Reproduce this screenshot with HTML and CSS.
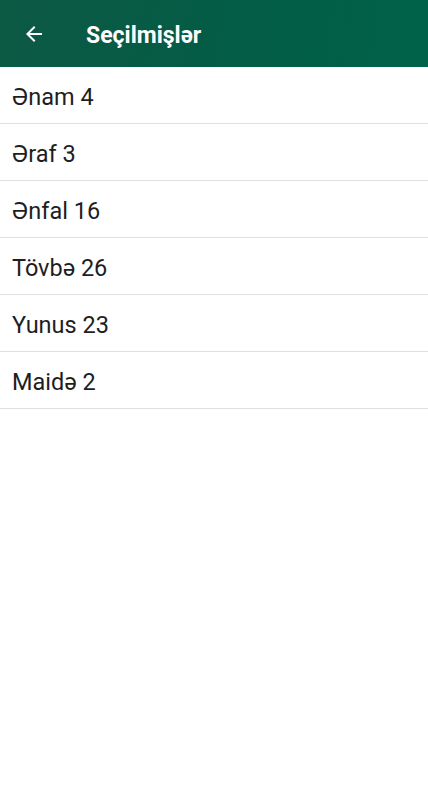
FILE: index.html
```html
<!DOCTYPE html>
<html>
<head>
<meta charset="utf-8">
<link rel="stylesheet" href="styles.css">
</head>
<body>
<header class="bar">
  <svg class="back" width="24" height="24" viewBox="0 0 24 24"><path d="M20 11H7.83l5.59-5.59L12 4l-8 8 8 8 1.41-1.41L7.83 13H20v-2z" fill="#fff"/></svg>
  <h1 class="title">Seçilmişlər</h1>
</header>
<ul class="list">
  <li class="item">Ənam 4</li>
  <li class="item">Əraf 3</li>
  <li class="item">Ənfal 16</li>
  <li class="item">Tövbə 26</li>
  <li class="item">Yunus 23</li>
  <li class="item">Maidə 2</li>
</ul>
</body>
</html>
```
FILE: styles.css
```css
html, body { margin: 0; padding: 0; background: #fff; }
body { font-family: Roboto, "Noto Sans", sans-serif; }
.bar {
  height: 67px;
  display: flex;
  align-items: center;
  background: linear-gradient(100deg, #0d5944 0%, #045c45 50%, #00624a 100%);
  padding-left: 22px;
}
.back { flex: none; margin-top: 1px; }
.title {
  margin: 0 0 0 40px;
  padding-top: 4px;
  color: #fff;
  font-size: 23px;
  font-weight: 700;
}
.list { list-style: none; margin: 0; padding: 0; }
.item {
  height: 52px;
  border-bottom: 1px solid #e0e0e0;
  display: flex;
  align-items: center;
  padding: 4px 0 0 12px;
  font-size: 23.5px;
  color: #1e1e1e;
}
```
